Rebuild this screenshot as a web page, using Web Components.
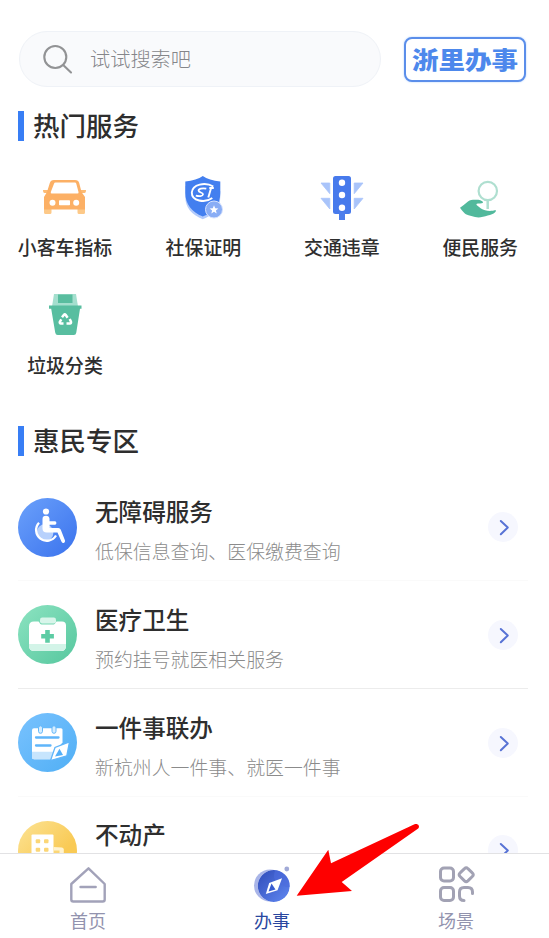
<!DOCTYPE html>
<html lang="zh-CN">
<head>
<meta charset="utf-8">
<title>办事</title>
<style>
html,body{margin:0;height:100%;background:#fff}
body{font-family:"Noto Sans CJK SC","Liberation Sans",sans-serif;color:#2e2e2e;overflow:hidden}
</style>
</head>
<body>
<service-app></service-app>
<script>
const icons = {
search:[42,43,32,32,`<g fill="none" stroke="#929395" stroke-width="2.1" stroke-linecap="round"><circle cx="55.3" cy="57" r="11"/><path d="M63.2 65 71 72.5"/></g>`],
car:[40,172,50,50,`<path d="M44 207h7.500v5.500q0 1.500-1.500 1.500h-4.500q-1.500 0-1.500-1.500zM77.500 207H85v5.500q0 1.500-1.500 1.500H79q-1.500 0-1.500-1.500z" fill="#fdc988"/><path d="M43 190h5l1 3h-4.500q-1.500 0-1.500-3zM86 190h-5l-1 3h4.500q1.500 0 1.500-3z" fill="#fdbb74"/><path fill-rule="evenodd" d="M54 180h21q3.500 0 4.200 3l2.300 9 3.500 5v12.500H44V197l3-5 2.800-9q.8-3 4.200-3zM55.500 182.500q-1.200 0-1.500 1.200L50.800 192q-.4 1.500 1 1.500h25.700q1.400 0 1-1.500l-2.200-8.300q-.3-1.200-1.500-1.200z" fill="#fcb065"/><g fill="#fff"><circle cx="52.500" cy="202.800" r="3"/><circle cx="76.200" cy="202.800" r="3"/><rect x="59" y="200.300" width="11" height="5" rx=".7"/></g>`],
shield:[178.700,172,50,50,`<path d="M186 186v11c0 11 7 18 17.500 22.300C214 215 221 208 221 197v-6z" fill="#b3cbfb"/><path d="M203.500 176c4 3 10 4.500 17.500 5.500V193c0 11-6.500 19-17.500 23.500C192.500 212 186 204 186 193v-11.500c7.500-1 13.500-2.500 17.500-5.500z" fill="#437fef"/><g fill="none" stroke="#fff"><path d="M214 186.500c-8-5-21-2.200-21.500 6-.2 8.500 13 11 20.500 5.500" stroke-width="1.900"/><path d="M207 188.700c-4-.8-8 0-7.700 2 .2 2 4.700 1.600 4.400 3.800-.3 1.900-4 2-7.200 1.200" stroke-width="1.800"/><path d="m211.800 188-2.800 9.500M210 188h4.500" stroke-width="1.900"/></g><circle cx="214.700" cy="209.500" r="8.500" fill="#89adf5" stroke="#d6e2fd" stroke-width="1"/><path d="m214.700 205.200 1.200 3 3.200.2-2.500 2 .8 3.100-2.700-1.700-2.700 1.700.8-3.100-2.500-2 3.200-.2z" fill="#fff"/>`],
light:[317,172,50,50,`<path d="M321 183h8.800v10.700zM321 198.300h8.800v10.700zM363 183h-8.800v10.700zM363 198.300h-8.800v10.700z" fill="#a9c4fa" stroke="#a9c4fa" stroke-width=".8" stroke-linejoin="round"/><rect x="333" y="176" width="18" height="38" rx="2.500" fill="#477aec"/><path d="M339 212h6v8h-6z" fill="#4d7eec"/><g fill="#fff"><circle cx="342" cy="182.700" r="3.200"/><circle cx="342" cy="195" r="3.200"/><circle cx="342" cy="207.700" r="3.200"/></g>`],
hand:[456,172,50,50,`<circle cx="488.800" cy="191" r="9.200" fill="none" stroke="#afdfd0" stroke-width="2.200"/><path d="M488.700 201v8" stroke="#afdfd0" stroke-width="2.500"/><path d="M461 207.700c5-3 8-8 13-8h4.500c2.500 0 5.500 1.500 5.500 2.500s-2 1.300-5 1.300c-2 0-2 1.200-.5 2.300l3.500 2.700c2.800 1.600 6.600 2.800 11 2.300 2-.5 4-1 4-.2 0 2.800-6.500 5-13 6.200-3 .7-5 .9-8 .2l-6.500-1.800c-4-1.200-5.500-3.500-8.500-7.500z" fill="#51b99c"/>`],
bin:[40,291,50,50,`<path d="M54 295h22l2 12.500H52z" fill="#a4dfce"/><path d="M58 295.500h14.500v8.500H58z" fill="#59bd9f"/><path d="M49 306.500h32.500v3.300H80L76.300 333.500q-.4 2.500-2.500 2.500H57.700q-2.100 0-2.500-2.500L51.200 309.800H49z" fill="#58bea0"/><g fill="none" stroke="#fff" stroke-width="2.500" stroke-linejoin="round"><path d="m62 318.300 2-2.600q.8-1 1.600 0l2 3M69.700 320l1.300 2.800q.4 1.500-1.200 1.700h-3.300M63.500 324.500H61q-1.600-.3-1.200-1.700l1.500-2.500"/></g>`],
wheel:[18,497.5,59,59,`<defs><linearGradient id="g" x2="1" y2="1"><stop stop-color="#6ba1fb"/><stop offset="1" stop-color="#3a72ed"/></linearGradient></defs><circle cx="47.500" cy="527" r="29.500" fill="url(#g)"/><circle cx="45" cy="532.200" r="8.400" fill="#b8d1fc"/><path d="M39 522.200A10.700 10.700 0 1 0 56 535" fill="none" stroke="#fff" stroke-width="2.300"/><circle cx="46" cy="511" r="3.100" fill="#fff"/><path d="M46 515.200q3.200 0 3.500 3v2.600H55q1.400.2 1.400 1.700T55 524.200h-5.500v3.300h8.800q1.800 0 2.500 1.700L65 540q.4 2-1.200 2.400-1.600.2-2.400-1.500L57.500 532H46.800q-4.300 0-4.300-4v-9.500q0-3.300 3.500-3.300z" fill="#fff"/>`],
medical:[18,605,59,59,`<defs><linearGradient id="g" x2="1" y2="1"><stop stop-color="#8ce3c1"/><stop offset="1" stop-color="#56c79e"/></linearGradient></defs><circle cx="47.500" cy="634.500" r="29.500" fill="url(#g)"/><path d="M34 621.500h4.500c.8 0 1.300 3 3 3h12.200c1.600 0 2-3 3-3H62q4 0 4 4V646q0 5-5 5H34.500q-5.500 0-5.500-5v-19.500q0-5 5-5z" fill="#fff"/><path d="M29 644h37v2q0 5-5 5H34q-5 0-5-5z" fill="#d3f4e8"/><rect x="40" y="617.500" width="16" height="6" rx="2.200" fill="#d8f5ea"/><path d="M47.500 630v12.700M41.200 636.300h12.700" stroke="#5dcca4" stroke-width="4.600"/>`],
notes:[18,712.7,59,59,`<defs><linearGradient id="g" x2="1" y2="1"><stop stop-color="#79c2fe"/><stop offset="1" stop-color="#50aff5"/></linearGradient></defs><circle cx="47.500" cy="742.200" r="29.500" fill="url(#g)"/><path d="M34 728h27q1.500 0 1.500 1.500v12.500L51 759H34q-2 0-2-2v-27q0-2 2-2z" fill="#fff"/><path d="M32 751.500h23L51 759H34q-2 0-2-2z" fill="#c7e5fd"/><g fill="#d5edff" stroke="#62b7fa" stroke-width="1"><rect x="38.500" y="725.500" width="4" height="7.500" rx="2"/><rect x="52" y="725.500" width="4" height="7.500" rx="2"/></g><path d="M36 737.200h22.500M36 745.200h14.500" stroke="#5fb5fa" stroke-width="2.300" stroke-linecap="round"/><path d="m69.500 741.500-2.700 14-16.300 4.700 4.500-13z" fill="#fff" stroke="#5fb5fa" stroke-width="1.300"/><path d="m59.500 748.500 3.500 6.200-8 1.500z" fill="#53aff8"/>`],
house:[18,820.5,59,59,`<defs><linearGradient id="g" x2="1" y2="1"><stop stop-color="#fce395"/><stop offset=".65" stop-color="#f9ca55"/></linearGradient></defs><circle cx="47.500" cy="850" r="29.500" fill="url(#g)"/><path d="M32.500 834h20q1 0 1 1v40h-22v-40q0-1 1-1z" fill="#fff"/><path d="M53.500 846.500 62 847q1.800.3 1.800 2v24H53.500z" fill="#fff3cf"/><g fill="#fbd676"><rect x="35.700" y="838.700" width="4.500" height="4" rx="1"/><rect x="44" y="838.700" width="4.500" height="4" rx="1"/><rect x="35.700" y="847.200" width="4.500" height="4" rx="1"/><rect x="44" y="847.200" width="4.500" height="4" rx="1"/><path d="M54 850h5.500v4H54z"/></g>`],
go:[488,512,30,30,`<circle cx="503" cy="527" r="15" fill="#f6f7fe"/><path d="m500.800 521 7 6.500-7 6.700" fill="none" stroke="#5873d5" stroke-width="2" stroke-linecap="round" stroke-linejoin="round"/>`],
home:[68,865,40,40,`<g fill="none" stroke="#a2a2b9" stroke-width="2.400" stroke-linejoin="round" stroke-linecap="round"><path d="M88.500 868.300 104.700 884v15.500q0 2-2 2H73.300q-2 0-2-2V884z"/><path d="M80.500 887h15.200"/></g>`],
compass:[252,865,40,40,`<defs><linearGradient id="g" x2="1" y2="1"><stop stop-color="#2f4bb9"/><stop offset="1" stop-color="#6189f2"/></linearGradient><clipPath id="c"><circle cx="273.800" cy="886" r="16"/></clipPath></defs><circle cx="270" cy="885.500" r="16" fill="#a9b5e8"/><g clip-path="url(#c)"><circle cx="273.800" cy="886" r="16" fill="url(#g)"/><path d="M276 869q-5 9 2 14t12 4v-18z" fill="#4c6ddd" opacity=".6"/></g><path d="m282 878.200-4.500 12-11.700 3.700 3.400-11z" fill="#fff"/><path d="m271.500 883.500 4 6-7 2z" fill="#375bd0"/><circle cx="286.800" cy="869" r="2.400" fill="#a1aad7"/>`],
scenes:[436,865,40,40,`<g fill="none" stroke="#a2a2b4" stroke-width="3"><rect x="440.500" y="868" width="13" height="13" rx="3.500"/><rect x="440.500" y="887.500" width="13" height="13" rx="3.500"/><path d="m464.500 868.700-4.400 4.200q-2 1.800 0 3.600l4.400 4.400q1.700 1.500 3.400 0l4.400-4.400q2-1.800 0-3.600l-4.400-4.200q-1.700-1.700-3.400 0z"/><path d="M472.500 893.500V892q0-4.500-4.500-4.500h-4q-4.500 0-4.500 4.500v4q0 4.500 4.500 4.500" stroke-linecap="round"/></g>`]
};
const define = (name, css, html) => customElements.define(name, class extends HTMLElement {
  connectedCallback() {
    if (this.shadowRoot) return;
    const t = document.createElement('template');
    t.innerHTML = `<style>${css}</style>${typeof html === 'function' ? html(this) : html}`;
    this.attachShadow({mode:'open'}).append(t.content.cloneNode(true));
  }
});
define('app-icon', ':host{display:block;flex:none}svg{display:block}', el => {
  const [x,y,w,h,art] = icons[el.getAttribute('name')];
  return `<svg width="${w}" height="${h}" viewBox="${x} ${y} ${w} ${h}">${art}</svg>`;
});
define('search-box', `:host{display:flex;box-sizing:border-box;width:362px;height:56px;border:1.5px solid #eff2f7;border-radius:28px;background:#f9fafc;align-items:center;padding-left:22px;gap:16px;font-size:20.2px;font-weight:300;color:#85868a}span{line-height:28px}`, '<app-icon name="search"></app-icon><span><slot></slot></span>');
define('brand-badge', `:host{display:flex;box-sizing:border-box;width:122px;height:45px;border:2px solid #5b8eea;border-radius:8px;align-items:center;justify-content:center;color:#4d88ec;box-shadow:0 0 2px #a9ccff;font-size:26.5px;font-weight:900;background:#fff}span{line-height:30px;transform:scaleY(.88);white-space:nowrap}`, '<span><slot></slot></span>');
define('section-title', `:host{display:flex;align-items:center;height:30px;gap:9px;padding-left:18px;font-size:26.5px;font-weight:500}i{width:6px;height:30px;background:#387ef5}span{line-height:30px;padding-bottom:2px}`, '<i></i><span><slot></slot></span>');
define('service-tile', `:host{display:flex;flex-direction:column;align-items:center;height:117.5px;font-size:18.9px;font-weight:500;white-space:nowrap}span{line-height:28px;margin-top:11px}`, el => `<app-icon name="${el.getAttribute('icon')}"></app-icon><span><slot></slot></span>`);
define('service-row', `:host{display:flex;box-sizing:border-box;height:107.7px;margin:0 21px 0 18px;border-bottom:1px solid var(--line,#fafafa);align-items:center;padding-right:10px}.t{flex:1;padding:6px 0 0 18px}b{display:block;font-size:23.6px;font-weight:500;line-height:36px}p{margin:6px 0 0;height:32px;font-size:18.900px;line-height:32px;color:#8b8b8b;font-weight:300}`, el => `<app-icon name="${el.getAttribute('icon')}"></app-icon><div class="t"><b><slot></slot></b><p><slot name="sub"></slot></p></div><app-icon name="go"></app-icon>`);
define('tab-item', `:host{display:flex;flex-direction:column;align-items:center;width:184px;flex:none;padding-top:11px;font-size:18px;color:#9293ae}:host([active]){color:#2a479f}span{line-height:26px;margin-top:2px}`, el => `<app-icon name="${el.getAttribute('icon')}"></app-icon><span><slot></slot></span>`);
define('tab-bar', `:host{display:flex;box-sizing:border-box;height:85px;flex:none;border-top:1px solid #e2e2e4;background:#fff}::slotted(:first-child){margin-left:-4px}`, '<slot></slot>');
define('pointer-arrow', `:host{position:absolute;left:290px;top:818px}svg{display:block}`, `<svg width="136" height="84" viewBox="290 818 136 84"><path d="m296.700 895.700 31.600-46 2.700 13.600L414.500 824.200c3-1.300 6 1.600 3.700 4.300L341.700 882l10.300 9z" fill="#fe0000"/></svg>`);
define('service-app', `:host{display:flex;flex-direction:column;height:938px;width:549px;position:relative;overflow:hidden}main{flex:1;min-height:0;overflow:hidden}header{display:flex;align-items:center;gap:23px;padding:31px 0 0 19px;height:56px}.first{margin-top:24px}.grid{display:grid;grid-template-columns:repeat(4,138.4px);margin:31px 0 0 -4.200px}.second{margin-top:18.500px}.list{margin-top:18.300px}`, `
<main><header><search-box>试试搜索吧</search-box><brand-badge>浙里办事</brand-badge></header>
<section-title class="first">热门服务</section-title>
<div class="grid"><service-tile icon="car">小客车指标</service-tile><service-tile icon="shield">社保证明</service-tile><service-tile icon="light">交通违章</service-tile><service-tile icon="hand">便民服务</service-tile><service-tile icon="bin">垃圾分类</service-tile></div>
<section-title class="second">惠民专区</section-title>
<div class="list"><service-row icon="wheel">无障碍服务<span slot="sub">低保信息查询、医保缴费查询</span></service-row><service-row icon="medical" style="--line:#ececec">医疗卫生<span slot="sub">预约挂号就医相关服务</span></service-row><service-row icon="notes">一件事联办<span slot="sub">新杭州人一件事、就医一件事</span></service-row><service-row icon="house">不动产</service-row></div></main>
<tab-bar><tab-item icon="home">首页</tab-item><tab-item icon="compass" active>办事</tab-item><tab-item icon="scenes">场景</tab-item></tab-bar><pointer-arrow></pointer-arrow>`);
</script>
</body>
</html>
